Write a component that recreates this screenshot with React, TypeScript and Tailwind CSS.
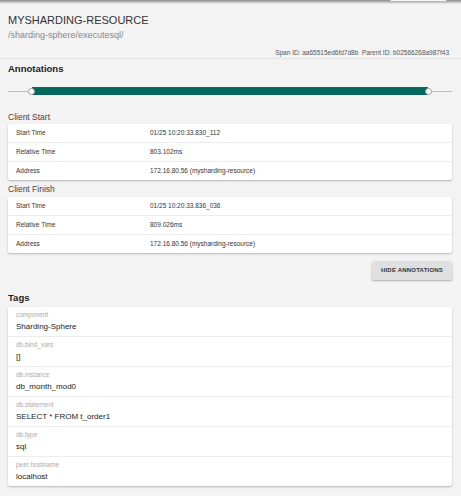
import React from 'react'

type Row = { label: string; value: string }

const clientStart: Row[] = [
  { label: 'Start Time', value: '01/25 10:20:33.830_112' },
  { label: 'Relative Time', value: '803.102ms' },
  { label: 'Address', value: '172.16.80.56 (mysharding-resource)' },
]

const clientFinish: Row[] = [
  { label: 'Start Time', value: '01/25 10:20:33.836_036' },
  { label: 'Relative Time', value: '809.026ms' },
  { label: 'Address', value: '172.16.80.56 (mysharding-resource)' },
]

const tags: Row[] = [
  { label: 'component', value: 'Sharding-Sphere' },
  { label: 'db.bind_vars', value: '[]' },
  { label: 'db.instance', value: 'db_month_mod0' },
  { label: 'db.statement', value: 'SELECT * FROM t_order1' },
  { label: 'db.type', value: 'sql' },
  { label: 'peer.hostname', value: 'localhost' },
]

function AnnotationCard({ rows }: { rows: Row[] }) {
  return (
    <div className="bg-white rounded-[2px] shadow-[0_1px_2px_rgba(0,0,0,0.25)]">
      {rows.map((r, i) => (
        <div
          key={r.label}
          className={`flex items-center pl-2 text-[6.5px] text-[#333] ${i > 0 ? 'h-[19px] border-t border-[#ececec]' : 'h-[18px]'}`}
        >
          <div className="w-[134px] shrink-0">{r.label}</div>
          <div>{r.value}</div>
        </div>
      ))}
    </div>
  )
}

function Timeline() {
  return (
    <div className="flex items-center h-[10px]">
      <div className="w-[20px] h-px bg-[#bdbdbd]" />
      <div className="relative z-10 w-[7px] h-[7px] rounded-full bg-white border border-[#9e9e9e] shrink-0" />
      <div className="flex-1 h-[8px] bg-[#00695c] -mx-[3px]" />
      <div className="relative z-10 w-[7px] h-[7px] rounded-full bg-white border border-[#9e9e9e] shrink-0" />
      <div className="w-[20px] h-px bg-[#bdbdbd]" />
    </div>
  )
}

export default function App() {
  return (
    <div
      className="w-[461px] h-[496px] overflow-hidden bg-[#f3f3f3]"
      style={{ fontFamily: '"Liberation Sans", Arial, sans-serif' }}
    >
      <div className="h-[4px] bg-gradient-to-b from-[#8a8a8a] to-[#f3f3f3] flex justify-end pr-[14px]">
        <div className="w-[57px] h-[2px] bg-[#f7f7f7] border-x border-b border-[#b5b5b5]" />
      </div>

      <div className="px-2 pt-[10px]">
        <div className="text-[11px] leading-[13px] text-[#333]">MYSHARDING-RESOURCE</div>
        <div className="mt-[2px] text-[9px] leading-[12px] text-[#888]">/sharding-sphere/executesql/</div>
        <div className="mt-[8px] text-right pr-[4px] text-[6.5px] leading-[8px] text-[#555]">
          Span ID: aa65515ed6fd7d8b&nbsp;&nbsp;Parent ID: b02566268a987f43
        </div>
      </div>
      <div className="mt-[1px] border-b border-[#e2e2e2]" />

      <div className="pl-2 pr-[9px]">
        <div className="mt-[4px] text-[9.5px] leading-[12px] font-bold text-[#222]">Annotations</div>
        <div className="mt-[11px]">
          <Timeline />
        </div>

        <div className="mt-[15px] text-[8.5px] leading-[12px] text-[#444]">Client Start</div>
        <div className="mt-[1px]">
          <AnnotationCard rows={clientStart} />
        </div>

        <div className="mt-[3px] text-[8.5px] leading-[12px] text-[#444]">Client Finish</div>
        <div className="mt-[2px]">
          <AnnotationCard rows={clientFinish} />
        </div>

        <div className="mt-[8px] flex justify-end">
          <button className="w-[80px] h-[19px] rounded-[2px] bg-[#e0e0e0] text-[6px] font-semibold tracking-[0.2px] text-[#333] shadow-[0_1px_2px_rgba(0,0,0,0.3)]">
            HIDE ANNOTATIONS
          </button>
        </div>

        <div className="mt-[12px] text-[9.5px] leading-[12px] font-bold text-[#222]">Tags</div>
        <div className="mt-[3px] bg-white rounded-[2px] shadow-[0_1px_2px_rgba(0,0,0,0.25)]">
          {tags.map((t, i) => (
            <div
              key={t.label}
              className={`pl-2 pt-[4px] ${i > 0 ? 'h-[30px] border-t border-[#ececec]' : 'h-[29px]'}`}
            >
              <div className="text-[6.5px] leading-[8px] text-[#aaa]">{t.label}</div>
              <div className="mt-[2px] text-[8px] leading-[11px] text-[#222]">{t.value}</div>
            </div>
          ))}
        </div>
      </div>
    </div>
  )
}
